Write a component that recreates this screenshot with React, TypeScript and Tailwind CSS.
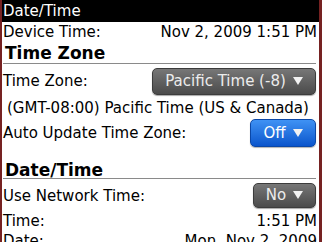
import React from "react";

const Tri = () => (
  <svg width="10" height="8" viewBox="0 0 10 8" className="shrink-0">
    <polygon points="0,0 10,0 5,8" fill="#f2f2f2" />
  </svg>
);

const GrayBtn = ({ label, w }: { label: string; w: string }) => (
  <div
    className={`${w} flex items-center justify-center gap-[7px] rounded-[5px] border border-[#3c3c3c] bg-gradient-to-b from-[#777777] to-[#4b4b4b] text-[#ececec] shadow-[0_1px_1px_rgba(0,0,0,0.35)]`}
  >
    <span className="leading-none">{label}</span>
    <Tri />
  </div>
);

export default function App() {
  return (
    <div
      className="w-[322px] h-[242px] overflow-hidden bg-white border-l-2 border-r-[3px] border-[#762222] text-black text-[15px]"
      style={{ fontFamily: '"DejaVu Sans", sans-serif' }}
    >
      <div className="h-[22px] bg-black text-white pl-[1px] leading-[22px]">Date/Time</div>

      <div className="h-[20px] flex justify-between pl-[1px] pr-[2px] leading-[20px]">
        <span>Device Time:</span>
        <span>Nov 2, 2009 1:51 PM</span>
      </div>

      <div className="h-[22px] pt-[2px] ml-[1px] mr-[3px] border-b border-[#8a8a8a] font-bold text-[17px] leading-[19px] pl-[2px]">
        Time Zone
      </div>

      <div className="h-[34px] flex items-center justify-between pl-[1px] pr-[3px]">
        <span className="leading-[17px]">Time Zone:</span>
        <div className="h-[27px] flex">
          <GrayBtn label="Pacific Time (-8)" w="w-[164px]" />
        </div>
      </div>

      <div className="h-[20px] leading-[20px] pl-[5px] whitespace-nowrap">
        (GMT-08:00) Pacific Time (US &amp; Canada)
      </div>

      <div className="h-[30px] flex items-center justify-between pl-[1px] pr-[3px]">
        <span className="leading-[17px]">Auto Update Time Zone:</span>
        <div className="w-[66px] h-[28px] flex items-center justify-center gap-[7px] rounded-[5px] border border-[#0b47a6] bg-gradient-to-b from-[#3f92f4] to-[#0a55cc] text-white shadow-[0_1px_1px_rgba(0,0,0,0.3)]">
          <span className="leading-none">Off</span>
          <Tri />
        </div>
      </div>

      <div className="h-[31px] pt-[14px] ml-[1px] mr-[3px] border-b border-[#8a8a8a] font-bold text-[17px] leading-[16px] pl-[2px]">
        Date/Time
      </div>

      <div className="h-[32px] flex items-center justify-between pl-[1px] pr-[3px]">
        <span className="leading-[17px] pt-[3px]">Use Network Time:</span>
        <div className="h-[25px] flex">
          <GrayBtn label="No" w="w-[63px]" />
        </div>
      </div>

      <div className="h-[20px] flex justify-between pl-[1px] pr-[2px] leading-[20px]">
        <span>Time:</span>
        <span>1:51 PM</span>
      </div>

      <div className="h-[20px] flex justify-between pl-[1px] pr-[2px] leading-[20px]">
        <span>Date:</span>
        <span>Mon, Nov 2, 2009</span>
      </div>
    </div>
  );
}
